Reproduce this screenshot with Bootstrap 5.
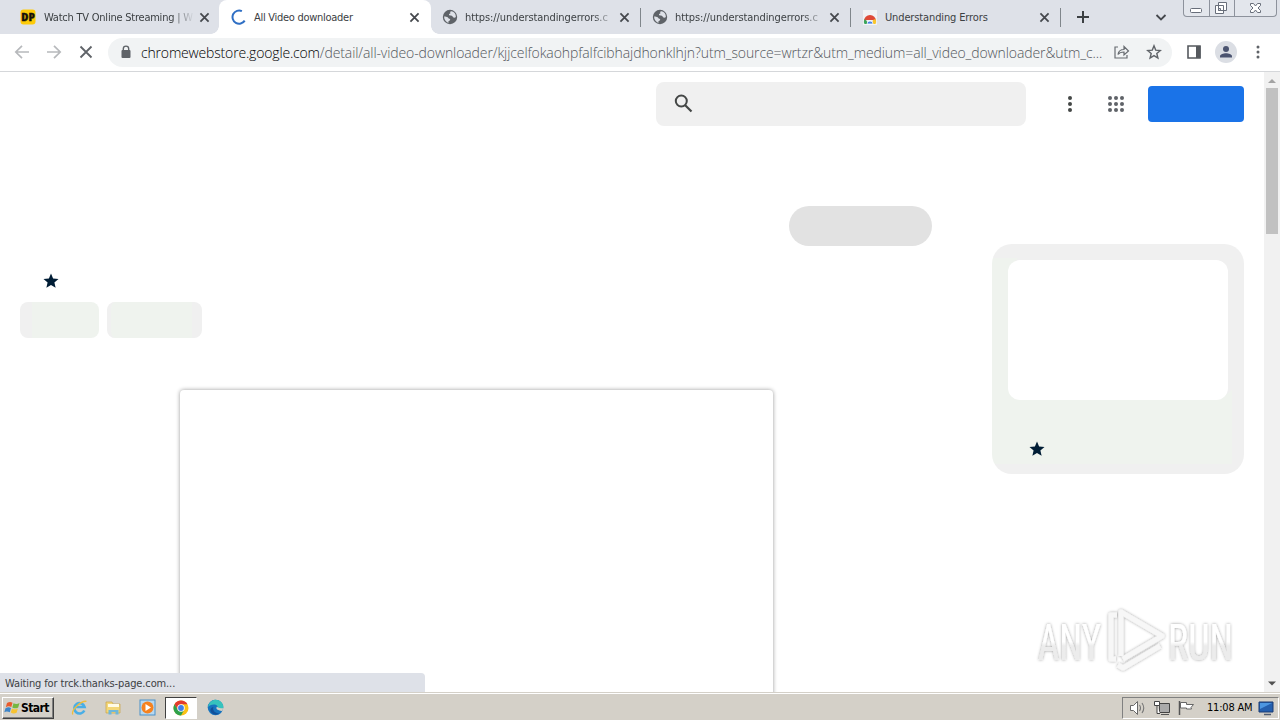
<!DOCTYPE html>
<html lang="en">
<head>
    <meta charset="UTF-8">
    <meta name="viewport" content="width=device-width, initial-scale=1.0">
    <title>All Video downloader</title>
    <link href="https://cdn.jsdelivr.net/npm/bootstrap@5.3.0/dist/css/bootstrap.min.css" rel="stylesheet">
    <style>
        body {
            width: 1280px;
            height: 720px;
            font-family: "DejaVu Sans Condensed", "DejaVu Sans", "Liberation Sans", sans-serif;
            font-stretch: condensed;
            font-size: 11px;
            line-height: 16px;
            color: #3c4043;
        }

        svg {
            display: block;
            flex: none;
        }

        /* tab strip */
        .tab-strip {
            height: 34px;
            padding-left: 10px;
            background-color: #dee1e8;
        }

        .browser-tab {
            width: 210px;
            padding-left: 12px;
            padding-right: 10px;
            position: relative;
        }

        .browser-tab.first-tab {
            padding-left: 10px;
        }

        .browser-tab.current {
            background-color: #fff;
            border-radius: 8px 8px 0 0;
            width: 212px;
            margin-left: -1px;
            margin-right: -1px;
            padding-right: 11px;
        }

        .browser-tab.current::before,
        .browser-tab.current::after {
            content: "";
            position: absolute;
            bottom: 0;
            width: 8px;
            height: 8px;
        }

        .browser-tab.current::before {
            left: -8px;
            background: radial-gradient(circle at 0 0, transparent 7.5px, #fff 8px);
        }

        .browser-tab.current::after {
            right: -8px;
            background: radial-gradient(circle at 100% 0, transparent 7.5px, #fff 8px);
        }

        .browser-tab.divided::after {
            content: "";
            position: absolute;
            right: -1px;
            top: 8px;
            width: 1px;
            height: 19px;
            background-color: #80868b;
        }

        .tab-label {
            width: 151px;
            margin-left: 7px;
            padding-top: 1px;
            white-space: nowrap;
        }

        .first-tab .tab-label {
            margin-left: 8px;
        }

        .fading {
            -webkit-mask-image: linear-gradient(to right, #000 128px, transparent 150px);
            mask-image: linear-gradient(to right, #000 128px, transparent 150px);
        }

        .sp-watch { letter-spacing: -.23px; }
        .sp-video { letter-spacing: -.28px; }
        .sp-https { letter-spacing: -.08px; }
        .sp-under { letter-spacing: -.13px; }

        .window-buttons {
            width: 94px;
            height: 17px;
            border: 1px solid #8d929c;
            border-top: 0;
            border-radius: 0 0 4px 4px;
            background-color: #e3e6ec;
            margin-right: 3px;
        }

        .window-buttons svg + svg {
            border-left: 1px solid #8d929c;
        }

        /* toolbar */
        .toolbar {
            height: 38px;
            border-bottom: 1px solid #d5d7da;
            padding-bottom: 1px;
            padding-left: 14px;
            padding-right: 14px;
        }

        .address {
            width: 1064px;
            height: 29px;
            margin-left: 14px;
            border-radius: 15px;
            background-color: #f1f3f4;
            padding-left: 12px;
            padding-right: 10px;
        }

        .address-text {
            width: 961px;
            margin-left: 9px;
            padding-top: 1px;
            font-family: "Open Sans", "Noto Sans", sans-serif;
            font-stretch: normal;
            font-weight: 300;
            font-size: 14px;
            letter-spacing: -.1px;
            color: #54585d;
            white-space: nowrap;
        }

        .address-text b {
            font-weight: 300;
            letter-spacing: -.17px;
            color: #000;
        }

        .side-panel-icon {
            margin-left: 15px;
        }

        /* web page */
        .viewport {
            height: 620px;
        }

        .web-header {
            height: 64px;
            padding-right: 20px;
        }

        .search-box {
            width: 370px;
            height: 44px;
            border-radius: 8px;
            background-color: #f0f0f0;
            padding-left: 18px;
        }

        .sign-in {
            width: 96px;
            height: 36px;
            border-radius: 4px;
            background-color: #1a73e8;
        }

        .item-column {
            width: 912px;
            margin-left: 20px;
            padding-top: 70px;
        }

        .add-button {
            width: 143px;
            height: 40px;
            border-radius: 20px;
            background-color: #e2e2e2;
        }

        .rating-row {
            height: 56px;
            padding: 26px 0 0 22px;
        }

        .chip {
            height: 36px;
            border-radius: 8px;
            background-color: #eff3ee;
            border: 0 solid #f0f0f0;
        }

        .chip-a {
            width: 79px;
            border-left-width: 12px;
        }

        .chip-b {
            width: 95px;
            border-width: 0 10px 0 4px;
        }

        .media-frame {
            width: 593px;
            height: 340px;
            margin: 52px 0 0 160px;
            border-radius: 4px;
            box-shadow: 0 0 4px rgba(0, 0, 0, .4);
        }

        .related {
            width: 252px;
            height: 230px;
            margin: 108px 20px 0 0;
            padding: 16px;
            border-radius: 20px;
            background: linear-gradient(#eff3ee, #eff3ee) 0 14px / 240px 206px no-repeat #f0f0f0;
        }

        .related-media {
            height: 140px;
            border-radius: 12px;
            background: #fff;
            box-shadow: 6px -5px 0 #f0f0f0;
        }

        .related svg {
            margin: 40px 0 0 20px;
        }

        .scrollbar {
            width: 16px;
            background-color: #f1f1f1;
        }

        .scroll-thumb {
            width: 12px;
            height: 146px;
            background-color: #c1c1c1;
        }

        .status-bubble {
            position: absolute;
            left: 0;
            bottom: 0;
            width: 425px;
            height: 19px;
            padding: 3px 0 0 5px;
            background-color: #dee1e8;
            border-top-right-radius: 4px;
            letter-spacing: -.12px;
            line-height: 15px;
        }

        .watermark {
            position: absolute;
            right: 36px;
            bottom: 13px;
        }

        /* taskbar */
        .taskbar {
            height: 28px;
            background-color: #d4d0c8;
            border-top: 1px solid #d4d0c8;
            box-shadow: inset 0 1px 0 #fff;
            color: #000;
            padding: 3px 1px 1px 2px;
        }

        .start-button {
            width: 52px;
            height: 22px;
            border: 1px solid;
            border-color: #fff #404040 #404040 #fff;
            box-shadow: inset -1px -1px 0 #808080;
            font-weight: 700;
            font-size: 12px;
            letter-spacing: -.55px;
            padding-left: 1px;
        }

        .quick-launch {
            margin-left: 9px;
        }

        .task-slot {
            width: 32px;
            height: 22px;
            margin-right: 2px;
        }

        .task-slot.pressed {
            background-color: #fff;
            border: 1px solid;
            border-color: #404040 #fff #fff #404040;
        }

        .tray {
            width: 157px;
            height: 22px;
            border: 1px solid;
            border-color: #808080 #fff #fff #808080;
            padding-left: 6px;
        }

        .clock {
            letter-spacing: -.2px;
            width: 48px;
            margin-left: 12px;
            white-space: nowrap;
        }
    </style>
</head>

<body class="overflow-hidden bg-white">
    <svg width="0" height="0" class="position-absolute">
        <symbol id="x-mark" viewBox="0 0 10 10"><path d="M1.3 1.3l7.4 7.4M8.7 1.3L1.3 8.7" fill="none" stroke="#45484d" stroke-width="1.6"/></symbol>
        <symbol id="globe" viewBox="0 0 16 16">
            <circle cx="8" cy="8" r="7.2" fill="#5f6368"/>
            <path d="M9.3 2.2c-1 .1-1.4.8-1 1.5.4.6-.3 1-.9 1.1-.6.2-.5 1-.1 1.4.7.6 2.4.1 3.1 1 .5.7.8 1.5 1.8 1.5.7 0 1.3-.3 1.7-.8C14 4.800 12 2.600 9.300 2.200zM2.100 7.500c1.400 0 2.700.1 3.600.8.8.6.6 1.4 1.700 1.500.9.1 1 .8.5 1.400-.6.7-1.500.7-1.500 1.600 0 .5 0 .8.2 1.100-2.600-.8-4.600-3.300-4.500-6.400z" fill="#dee1e8"/>
        </symbol>
        <symbol id="star" viewBox="0 0 24 24"><path d="M12 17.27L18.180 21l-1.640-7.030L22 9.240l-7.190-.61L12 2 9.190 8.630 2 9.240l5.460 4.730L5.820 21z" fill="#001d35"/></symbol>
        <symbol id="chrome" viewBox="0 0 16 16">
            <circle cx="8" cy="8" r="7.500" fill="#fbc116"/>
            <path d="M1.500 4.250A7.500 7.500 0 0 1 14.500 4.250H8L4.750 9.900z" fill="#e33b2e"/>
            <path d="M1.500 4.250A7.500 7.500 0 0 0 8 15.500L11.250 9.870 4.750 9.870z" fill="#2da14c"/>
            <circle cx="8" cy="8" r="3.750" fill="#fff"/>
            <circle cx="8" cy="8" r="2.900" fill="#3f7fe8"/>
        </symbol>
    </svg>

    <div class="tab-strip d-flex">
        <div class="browser-tab first-tab d-flex align-items-center">
            <svg width="16" height="16"><rect x=".5" y=".5" width="15" height="15" rx="3" fill="#fecb08"/><text x="8" y="11.700" text-anchor="middle" font-family="Open Sans, sans-serif" font-weight="800" font-size="10" fill="#15110a" stroke="#15110a" stroke-width=".3" textLength="13.500" lengthAdjust="spacingAndGlyphs">DP</text></svg>
            <div class="tab-label fading sp-watch">Watch TV Online Streaming | W</div>
            <svg class="ms-auto" width="11" height="11"><use href="#x-mark"/></svg>
        </div>
        <div class="browser-tab current d-flex align-items-center">
            <svg width="16" height="16"><path d="M10.900 2.100A6.600 6.600 0 1 0 13.700 11.600" fill="none" stroke="#2f6fc4" stroke-width="2"/></svg>
            <div class="tab-label sp-video">All Video downloader</div>
            <svg class="ms-auto" width="11" height="11"><use href="#x-mark"/></svg>
        </div>
        <div class="browser-tab divided d-flex align-items-center">
            <svg width="16" height="16"><use href="#globe"/></svg>
            <div class="tab-label fading sp-https">https://understandingerrors.c</div>
            <svg class="ms-auto" width="11" height="11"><use href="#x-mark"/></svg>
        </div>
        <div class="browser-tab divided d-flex align-items-center">
            <svg width="16" height="16"><use href="#globe"/></svg>
            <div class="tab-label fading sp-https">https://understandingerrors.c</div>
            <svg class="ms-auto" width="11" height="11"><use href="#x-mark"/></svg>
        </div>
        <div class="browser-tab divided d-flex align-items-center">
            <svg width="16" height="16"><rect x="1" y="1" width="14" height="15" fill="#f1f2f4"/><path d="M2 12a6 6 0 0 1 12 0l-3.500-1H5z" fill="#df4937"/><path d="M2.500 10A6 6 0 0 0 2.500 15H6L4.700 12z" fill="#3ba55b"/><path d="M13.500 10A6 6 0 0 1 13.500 15H10l1-4z" fill="#f9c62c"/><path d="M5 15a3 3 0 0 1 6 0z" fill="#4b83e6" stroke="#fff" stroke-width=".7"/></svg>
            <div class="tab-label sp-under">Understanding Errors</div>
            <svg class="ms-auto" width="11" height="11"><use href="#x-mark"/></svg>
        </div>
        <svg class="mt-2 ms-3" width="14" height="17"><path d="M7 3v12M1 9h12" stroke="#3c4043" stroke-width="2"/></svg>
        <svg class="ms-auto mt-2" width="12" height="17"><path d="M1.500 7l4.500 4.500L10.500 7" fill="none" stroke="#45484d" stroke-width="1.800"/></svg>
        <div class="window-buttons d-flex ms-3">
            <svg width="25" height="16"><rect x="6.500" y="8.500" width="11" height="4" rx="1" fill="#fff" stroke="#686e7a"/></svg>
            <svg width="25" height="16"><path d="M8.500 2.500h8v8h-8zM5.500 5.500h8v8h-8z" fill="#fff" stroke="#686e7a"/><path d="M8.500 8.500h2v2h-2z" fill="#dee1e8" stroke="#686e7a"/></svg>
            <svg width="42" height="16"><path d="M15.500 3.500h3l2 2.500 2-2.500h3v2L23 8l2.500 2.500v2h-3L20.500 10l-2 2.500h-3v-2L18 8l-2.500-2.500z" fill="#fff" stroke="#686e7a"/></svg>
        </div>
    </div>

    <div class="toolbar d-flex align-items-center">
        <svg width="16" height="16"><path d="M15 8H2M8 1.800L1.800 8 8 14.200" fill="none" stroke="#b7b9bc" stroke-width="1.700"/></svg>
        <svg class="ms-3" width="16" height="16"><path d="M1 8h13M8 1.800L14.200 8 8 14.200" fill="none" stroke="#b7b9bc" stroke-width="1.700"/></svg>
        <svg class="ms-3" width="16" height="16"><path d="M2.500 2.500l11 11M13.500 2.500l-11 11" stroke="#5f6368" stroke-width="1.800"/></svg>
        <div class="address d-flex align-items-center">
            <svg width="12" height="14"><path d="M3.300 6V3.800a2.700 2.700 0 0 1 5.400 0V6" fill="none" stroke="#5f6368" stroke-width="1.400"/><rect x="1.500" y="5" width="9" height="8" rx="1" fill="#5f6368"/></svg>
            <div class="address-text"><b>chromewebstore.google.com</b>/detail/all-video-downloader/kjjcelfokaohpfalfcibhajdhonklhjn?utm_source=wrtzr&amp;utm_medium=all_video_downloader&amp;utm_c...</div>
            <svg class="ms-auto me-3" width="17" height="16"><path d="M5 3H2v11h12v-3M5 10.500c.5-3.500 2.500-5 6-5V2.500l4.500 4.500-4.500 4V8c-3 0-4.700.7-6 2.500z" fill="none" stroke="#686c71" stroke-width="1.200"/></svg>
            <svg width="16" height="16"><path d="M8 1.800l1.700 4.300 4.600.4-3.500 3 1.100 4.500L8 11.600l-3.900 2.400 1.100-4.500-3.500-3 4.600-.4z" fill="none" stroke="#5f6368" stroke-width="1.400"/></svg>
        </div>
        <svg class="side-panel-icon" width="14" height="14"><path d="M1 1h12v12H1z" fill="none" stroke="#55595e" stroke-width="1.600"/><path d="M9 1h4.500v12H9z" fill="#55595e"/></svg>
        <svg class="ms-auto" width="22" height="22"><circle cx="11" cy="11" r="11" fill="#dbdee4"/><circle cx="11" cy="8" r="3" fill="#4b5470"/><path d="M5 16.500v-1.300c0-2 3.500-3 6-3s6 1 6 3v1.300z" fill="#4b5470"/></svg>
        <svg class="ms-auto" width="16" height="16"><g fill="#5f6368"><circle cx="8" cy="3" r="1.500"/><circle cx="8" cy="8" r="1.500"/><circle cx="8" cy="13" r="1.500"/></g></svg>
    </div>

    <div class="viewport position-relative overflow-hidden d-flex">
        <div class="flex-fill">
            <div class="web-header d-flex align-items-center justify-content-end">
                <div class="search-box d-flex align-items-center">
                    <svg width="20" height="20"><circle cx="7.300" cy="7" r="5.500" fill="none" stroke="#444746" stroke-width="2"/><path d="M11 11l6.500 6.500" stroke="#444746" stroke-width="2.200"/></svg>
                </div>
                <svg width="122" height="24">
                    <g fill="#444746"><circle cx="44" cy="6" r="2"/><circle cx="44" cy="12" r="2"/><circle cx="44" cy="18" r="2"/></g>
                    <g fill="#5f6368">
                        <circle cx="84" cy="6" r="2"/><circle cx="90" cy="6" r="2"/><circle cx="96" cy="6" r="2"/>
                        <circle cx="84" cy="12" r="2"/><circle cx="90" cy="12" r="2"/><circle cx="96" cy="12" r="2"/>
                        <circle cx="84" cy="18" r="2"/><circle cx="90" cy="18" r="2"/><circle cx="96" cy="18" r="2"/>
                    </g>
                </svg>
                <div class="sign-in"></div>
            </div>
            <div class="d-flex justify-content-between">
                <div class="item-column">
                    <div class="add-button ms-auto"></div>
                    <div class="rating-row"><svg width="18" height="18"><use href="#star"/></svg></div>
                    <div class="d-flex gap-2">
                        <div class="chip chip-a"></div>
                        <div class="chip chip-b"></div>
                    </div>
                    <div class="media-frame"></div>
                </div>
                <div class="related">
                    <div class="related-media"></div>
                    <svg width="18" height="18"><use href="#star"/></svg>
                </div>
            </div>
        </div>
        <div class="scrollbar d-flex flex-column align-items-center">
            <svg width="16" height="16"><path d="M4 11l4-4 4 4z" fill="#a3a3a3"/></svg>
            <div class="scroll-thumb"></div>
            <svg class="mt-auto" width="16" height="16"><path d="M4 5.500h8l-4 4z" fill="#505050"/></svg>
        </div>
        <div class="status-bubble">Waiting for trck.thanks-page.com...</div>
        <svg class="watermark" width="210" height="74">
            <defs>
                <filter id="soft" x="-10%" y="-20%" width="120%" height="140%"><feDropShadow dx="0" dy="0" stdDeviation="1.800" flood-color="#000" flood-opacity=".4"/></filter>
                <linearGradient id="pale" x1="0" y1="0" x2="0" y2="1"><stop offset=".48" stop-color="#fff"/><stop offset=".55" stop-color="#ececec"/></linearGradient>
            </defs>
            <g filter="url(#soft)" font-family="Roboto, sans-serif" font-size="50" fill="url(#pale)">
                <text x="4" y="55" textLength="63" lengthAdjust="spacingAndGlyphs">ANY</text>
                <text x="134" y="55" textLength="65" lengthAdjust="spacingAndGlyphs">RUN</text>
                <g fill="none" stroke="#f7f7f7" stroke-width="5" stroke-linejoin="round">
                    <path d="M83 10h-6v44h5"/>
                    <path d="M87 51V7l41 24-39 23"/>
                    <path d="M84 60l5 3 37-22"/>
                </g>
            </g>
        </svg>
    </div>

    <div class="taskbar d-flex align-items-center">
        <div class="start-button d-flex align-items-center">
            <svg width="17" height="16"><path d="M3 3q3-2 5.500-.3L7.300 7Q4.500 5.500 1.800 7.200z" fill="#e95b2c"/><path d="M9.500 3.200q3 1.700 6-.2l-1.300 4.500q-3 1.700-5.900 0z" fill="#75b740"/><path d="M1.500 8.200q3-1.700 5.500-.2l-1.200 4.300q-3-1.700-5.500 0z" fill="#3d85c9"/><path d="M8 8.500q3 1.700 5.900 0l-1.300 4.300q-3 1.700-5.800-.2z" fill="#f7c331"/></svg>
            <span>Start</span>
        </div>
        <div class="quick-launch d-flex">
            <div class="task-slot d-flex align-items-center justify-content-center"><svg width="17" height="17"><path d="M13.300 11.500A5.200 5.200 0 1 1 13.600 8H4" fill="none" stroke="#49aee6" stroke-width="2.600"/><path d="M1.800 15.500C-.2 11 10 1.500 15.500 2.300" fill="none" stroke="#efbd3c" stroke-width="1.300"/></svg></div>
            <div class="task-slot d-flex align-items-center justify-content-center"><svg width="17" height="17"><path d="M1 3h6l1 2h7v9H1z" fill="#f3d778" stroke="#c9a548" stroke-width=".7"/><path d="M3 5h11v3H3z" fill="#fffbe6"/><path d="M3.500 15.500V11h10v4.500h-3V13h-4v2.500z" fill="#6fb7da"/></svg></div>
            <div class="task-slot d-flex align-items-center justify-content-center"><svg width="17" height="17"><rect x="1" y="1" width="15" height="15" fill="#b8d8ef" stroke="#4b91c9"/><circle cx="8.500" cy="8.500" r="6" fill="#f58220"/><path d="M6.500 5l5.500 3.500L6.500 12z" fill="#fff"/></svg></div>
            <div class="task-slot pressed d-flex align-items-center justify-content-center"><svg width="16" height="16"><use href="#chrome"/></svg></div>
            <div class="task-slot d-flex align-items-center justify-content-center"><svg width="17" height="17"><circle cx="8.500" cy="8.500" r="7.800" fill="#1673be"/><path d="M1 8C2 3 5.500.7 8.500.7c4.500 0 8 3.500 7.800 7.300-.2 2.800-3.300 3.600-6 2.500 1-1.500.6-4.700-2.600-5C4.500 5.200 2.500 6.500 1 8z" fill="#36c3bd"/><path d="M10.300 10.500c-1-.4-1.200-1.600-.4-2.700.5 0 1.100 1.700 6.200 1.500l-.5 2.500c-1.600.3-3.800-.3-5.300-1.300z" fill="#d4d0c8"/><path d="M6.500 8c-1.500 3 1.500 6.500 6 6.500C8 17.500 2.500 14 3.500 10.500 4 9 5 8.200 6.500 8z" fill="#12509a"/></svg></div>
        </div>
        <div class="tray d-flex align-items-center ms-auto">
            <svg width="17" height="16"><path d="M1.500 5.500h3l4-4v13l-4-4h-3z" fill="#fff" stroke="#686868"/><path d="M10.500 5q2 3 0 6M13 3q3.500 5 0 10" fill="none" stroke="#777" stroke-width="1.100"/></svg>
            <svg class="ms-2" width="16" height="16"><path d="M5.500 3.500h10v9h-10z" fill="#aaa" stroke="#444"/><path d="M7 14.500h8" stroke="#555"/><path d="M.5 1.500h5v4h-5zM3 5.500v8h3" fill="#fff" stroke="#444"/></svg>
            <svg class="ms-2" width="17" height="16"><path d="M1.500 1v14" stroke="#555" stroke-width="1.500"/><path d="M2.500 2.500h6v2h7l-2.500 3 .5 1.500H8.500v-1h-6z" fill="#fff" stroke="#666"/></svg>
            <div class="clock">11:08 AM</div>
            <svg class="ms-auto me-1" width="16" height="16"><path d="M1 2h14v10H1z" fill="#245fae" stroke="#183a72"/><path d="M2 3h12L2 9z" fill="#4c96e1"/><path d="M6 14.500h7" stroke="#505c70" stroke-width="1.500"/></svg>
        </div>
    </div>

    <script src="https://cdn.jsdelivr.net/npm/bootstrap@5.3.0/dist/js/bootstrap.bundle.min.js"></script>
</body>
</html>
